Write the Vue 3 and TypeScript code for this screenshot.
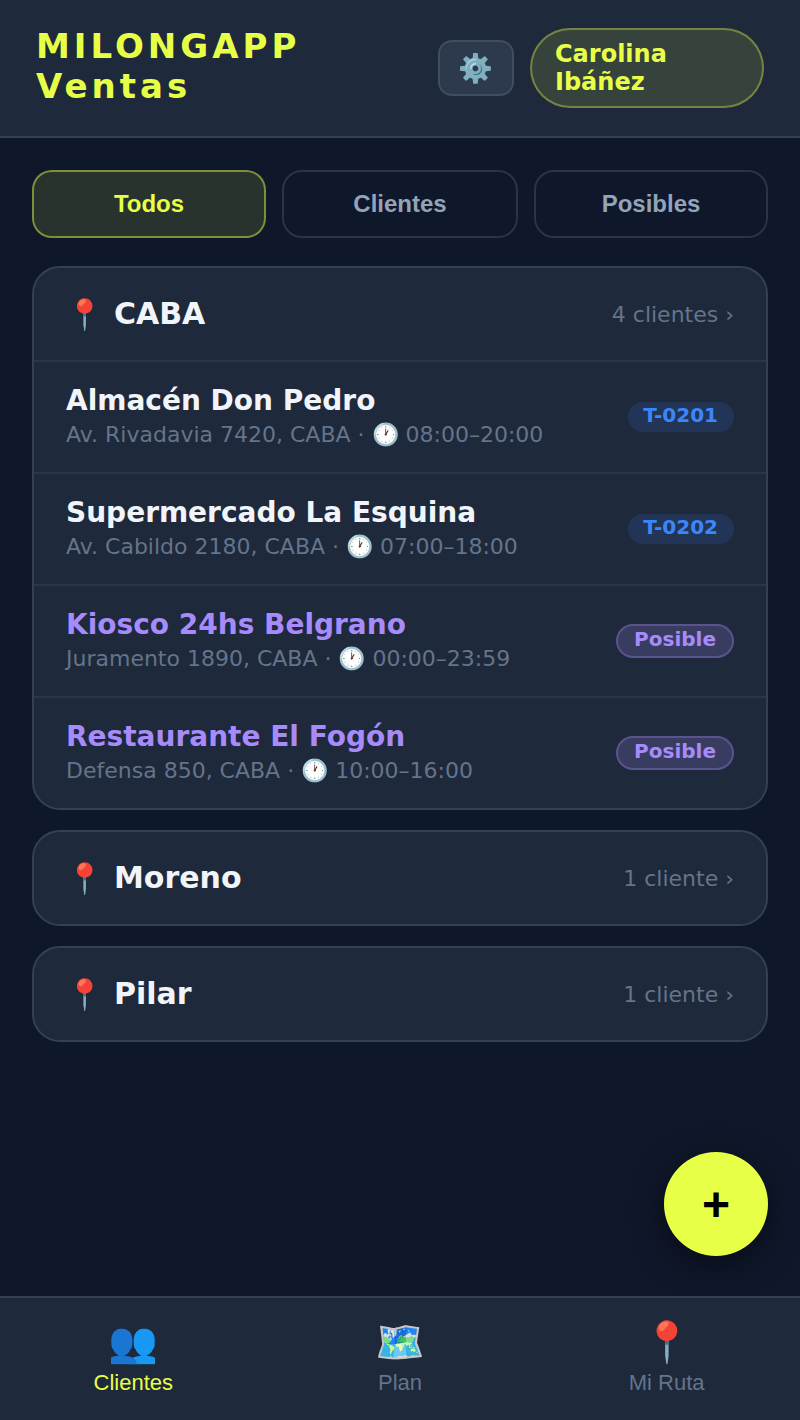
<template>
  <div class="app">
    <header class="topbar">
      <h1 class="brand">MILONGAPP<br>Ventas</h1>
      <div class="topbar-actions">
        <button class="gear-btn">⚙️</button>
        <div class="user-pill">Carolina Ibáñez</div>
      </div>
    </header>

    <main class="content">
      <div class="tabs">
        <button
          v-for="t in tabs"
          :key="t"
          :class="['tab', { active: t === activeTab }]"
          @click="activeTab = t"
        >{{ t }}</button>
      </div>

      <section v-for="zone in zones" :key="zone.name" class="zone">
        <div class="zone-head">
          <span class="zone-title"><span class="zone-pin">📍</span>{{ zone.name }}</span>
          <span class="zone-count">{{ zone.count }} ›</span>
        </div>
        <div v-for="c in zone.clients" :key="c.name" class="client">
          <div class="client-info">
            <div :class="['client-name', { possible: !c.code }]">{{ c.name }}</div>
            <div class="client-sub">{{ c.address }} · 🕐 {{ c.hours }}</div>
          </div>
          <span v-if="c.code" class="badge code">{{ c.code }}</span>
          <span v-else class="badge maybe">Posible</span>
        </div>
      </section>
    </main>

    <button class="fab">+</button>

    <nav class="bottom-nav">
      <div
        v-for="item in navItems"
        :key="item.label"
        :class="['nav-item', { active: item.label === 'Clientes' }]"
      >
        <span class="nav-icon">{{ item.icon }}</span>
        <span class="nav-label">{{ item.label }}</span>
      </div>
    </nav>
  </div>
</template>

<script setup lang="ts">
import { ref } from 'vue'

interface Client {
  name: string
  address: string
  hours: string
  code?: string
}

const tabs = ['Todos', 'Clientes', 'Posibles']
const activeTab = ref('Todos')

const zones: { name: string; count: string; clients: Client[] }[] = [
  {
    name: 'CABA',
    count: '4 clientes',
    clients: [
      { name: 'Almacén Don Pedro', address: 'Av. Rivadavia 7420, CABA', hours: '08:00–20:00', code: 'T-0201' },
      { name: 'Supermercado La Esquina', address: 'Av. Cabildo 2180, CABA', hours: '07:00–18:00', code: 'T-0202' },
      { name: 'Kiosco 24hs Belgrano', address: 'Juramento 1890, CABA', hours: '00:00–23:59' },
      { name: 'Restaurante El Fogón', address: 'Defensa 850, CABA', hours: '10:00–16:00' }
    ]
  },
  { name: 'Moreno', count: '1 cliente', clients: [] },
  { name: 'Pilar', count: '1 cliente', clients: [] }
]

const navItems = [
  { icon: '👥', label: 'Clientes' },
  { icon: '🗺️', label: 'Plan' },
  { icon: '📍', label: 'Mi Ruta' }
]
</script>

<style>
body {
  background: #0f172a;
}
</style>

<style scoped>
.app {
  position: relative;
  width: 800px;
  height: 1420px;
  display: flex;
  flex-direction: column;
  background: #0f172a;
  font-family: "DejaVu Sans", sans-serif;
  overflow: hidden;
}

.topbar {
  height: 138px;
  box-sizing: border-box;
  display: flex;
  align-items: center;
  justify-content: space-between;
  padding: 0 36px;
  background: #1e293b;
  border-bottom: 2px solid #334155;
}

.brand {
  margin: 0;
  padding-bottom: 4px;
  font-size: 34px;
  line-height: 40px;
  font-weight: 700;
  letter-spacing: 4px;
  color: #e8ff47;
}

.topbar-actions {
  display: flex;
  align-items: center;
  gap: 16px;
}

.gear-btn {
  width: 76px;
  height: 56px;
  border: 2px solid #3f4d61;
  border-radius: 14px;
  background: #2d3a4d;
  font-size: 28px;
  padding: 0 1px 0 0;
  font-family: "DejaVu Sans", sans-serif;
}

.user-pill {
  width: 234px;
  height: 80px;
  box-sizing: border-box;
  display: flex;
  align-items: center;
  padding: 0 23px;
  border: 2px solid rgba(232, 255, 71, 0.35);
  border-radius: 40px;
  background: rgba(232, 255, 71, 0.12);
  color: #e8ff47;
  font-size: 24px;
  line-height: 28px;
  font-weight: 700;
}

.content {
  flex: 1;
  display: flex;
  flex-direction: column;
  gap: 20px;
  padding: 32px;
}

.tabs {
  display: grid;
  grid-template-columns: 234px 236px 234px;
  gap: 16px;
  margin-bottom: 8px;
}

.tab {
  height: 68px;
  border: 2px solid #2a3447;
  border-radius: 20px;
  background: transparent;
  color: #94a3b8;
  font-family: "Liberation Sans", sans-serif;
  font-size: 24px;
  font-weight: 700;
}

.tab.active {
  border-color: rgba(232, 255, 71, 0.45);
  background: rgba(232, 255, 71, 0.12);
  color: #e8ff47;
}

.zone {
  background: #1e293b;
  border: 2px solid #334155;
  border-radius: 28px;
  overflow: hidden;
}

.zone-head {
  height: 92px;
  display: flex;
  align-items: center;
  justify-content: space-between;
  padding: 0 32px;
}

.zone-title {
  display: flex;
  align-items: center;
  gap: 11px;
  padding-bottom: 2px;
  font-size: 30px;
  font-weight: 700;
  color: #f1f5f9;
}

.zone-pin {
  margin-top: 2px;
  font-size: 30px;
}

.zone-count {
  font-size: 22px;
  color: #64748b;
}

.client {
  height: 112px;
  box-sizing: border-box;
  display: flex;
  align-items: center;
  justify-content: space-between;
  padding: 0 32px;
  border-top: 2px solid #2a3648;
}

.client-info {
  padding-top: 1px;
}

.client-name {
  font-size: 28px;
  line-height: 32px;
  font-weight: 700;
  color: #f1f5f9;
}

.client-name.possible {
  color: #a78bfa;
}

.client-sub {
  margin-top: 3px;
  font-size: 22px;
  line-height: 30px;
  color: #64748b;
}

.badge {
  border-radius: 20px;
  font-size: 20px;
  font-weight: 700;
}

.badge.code {
  padding: 1px 16px 5px 15px;
  background: rgba(59, 130, 246, 0.15);
  color: #3b86fa;
}

.badge.maybe {
  padding: 1px 16px 5px;
  border: 2px solid rgba(167, 139, 250, 0.3);
  background: rgba(167, 139, 250, 0.2);
  color: #a78bfa;
}

.fab {
  position: absolute;
  right: 32px;
  bottom: 164px;
  width: 104px;
  height: 104px;
  border: none;
  border-radius: 50%;
  background: #e8ff47;
  color: #000;
  font-family: "Liberation Sans", sans-serif;
  font-size: 48px;
  font-weight: 700;
  box-shadow: 0 8px 32px rgba(0, 0, 0, 0.5);
}

.bottom-nav {
  height: 124px;
  box-sizing: border-box;
  display: flex;
  background: #1e293b;
  border-top: 2px solid #334155;
}

.nav-item {
  flex: 1;
  display: flex;
  flex-direction: column;
  align-items: center;
  padding-top: 17px;
  color: #64748b;
  font-family: "Liberation Sans", sans-serif;
}

.nav-item.active {
  color: #e8ff47;
}

.nav-icon {
  font-size: 40px;
  line-height: 54px;
}

.nav-label {
  margin-top: 1px;
  font-size: 22px;
  line-height: 26px;
}
</style>
